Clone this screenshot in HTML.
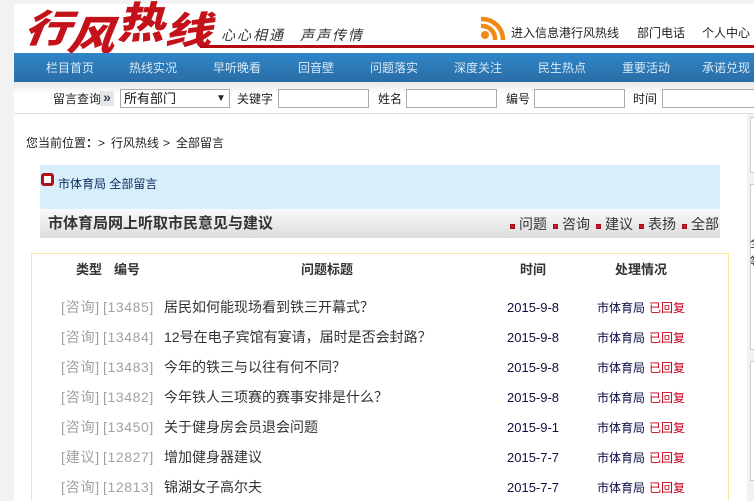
<!DOCTYPE html>
<html lang="zh"><head><meta charset="utf-8"><style>
html,body{margin:0;padding:0;width:754px;height:501px;overflow:hidden;background:#fff}
body{position:relative;font-family:"Liberation Sans","WenQuanYi Zen Hei","Noto Sans CJK SC",sans-serif;font-size:12px;color:#222}
.a{position:absolute;white-space:nowrap;line-height:16px}
.n{top:60px;color:#d9e9f6}
.l{top:91px}
.i{position:absolute;top:89px;height:17px;box-sizing:content-box;border:1px solid #aaa;background:#fff;width:89px}
.t{font-size:14px;color:#333;left:164px}
.c{font-size:14px;color:#a2a2a2;left:61px;letter-spacing:.8px}
.c span{position:absolute;left:42px;letter-spacing:.6px}
.d{left:507px;color:#110f3c;font-size:13px}
.s{left:597px;color:#0b0b45}
.s b{font-weight:normal;color:#c4001a;margin-left:4px}
.h{top:262px;font-weight:bold;color:#333;font-size:13px}
.q{position:absolute;top:224px;width:5px;height:5px;background:radial-gradient(#e02030,#8a0010)}
.m{top:216px;font-size:14px;color:#333}
.b{position:absolute;left:750px;width:6px;border:1px solid #ccc;background:#fff;box-sizing:border-box}
</style></head><body>
<div class="a" style="left:0;top:0;width:14px;height:501px;background:#f2f2f2"></div>
<div class="a" style="left:0;top:0;width:754px;height:4px;background:#f2f2f2"></div>
<svg class="a" style="left:14px;top:0" width="230" height="54">
<g fill="#c4121a" font-family="Noto Sans CJK SC" font-weight="900">
<text font-size="38" transform="translate(9,42) skewX(-22) scale(1.22,1)">行</text>
<text font-size="40" transform="translate(52,50) skewX(-22) scale(1.18,1)">风</text>
<text font-size="43" transform="translate(103,38) skewX(-14) scale(1.1,1)">热</text>
<text font-size="38" transform="translate(150,44) skewX(-18) scale(1.24,1)">线</text>
</g></svg>
<div class="a" style="left:221px;top:27px;font-size:14px;font-style:italic;letter-spacing:2px;color:#333">心心相通</div>
<div class="a" style="left:300px;top:27px;font-size:14px;font-style:italic;letter-spacing:2px;color:#333">声声传情</div>
<div class="a" style="left:200px;top:45px;width:554px;height:3px;background:#b40a10"></div>
<svg class="a" style="left:480px;top:16px" width="26" height="25"><g fill="none" stroke="#f08a14" stroke-width="4.5"><path d="M1 10A13 13 0 0 1 15 24"/><path d="M1 3A21 21 0 0 1 23 24"/></g><circle cx="5" cy="19" r="4" fill="#f08a14"/></svg>
<div class="a" style="left:511px;top:25px">进入信息港行风热线</div>
<div class="a" style="left:637px;top:25px">部门电话</div>
<div class="a" style="left:702px;top:25px">个人中心</div>
<div class="a" style="left:14px;top:53px;width:740px;height:29px;background:linear-gradient(#2f86c8,#2a6da6)"></div>
<div class="a n" style="left:46px">栏目首页</div><div class="a n" style="left:129px">热线实况</div><div class="a n" style="left:213px">早听晚看</div><div class="a n" style="left:298px">回音壁</div><div class="a n" style="left:370px">问题落实</div><div class="a n" style="left:454px">深度关注</div><div class="a n" style="left:538px">民生热点</div><div class="a n" style="left:622px">重要活动</div><div class="a n" style="left:702px">承诺兑现</div>
<div class="a" style="left:14px;top:82px;width:740px;height:31px;background:linear-gradient(#e8e8e8,#fff 40%);border-bottom:1px solid #ddd"></div>
<div class="a l" style="left:53px">留言查询</div>
<div class="a" style="left:100px;top:91px;width:14px;height:15px;background:#e6e6e6;color:#345;font-size:14px;font-weight:bold;line-height:13px;text-align:center">»</div>
<div class="i" style="left:120px;width:108px"></div>
<div class="a" style="left:124px;top:91px;font-size:13px;color:#111">所有部门</div>
<div class="a" style="left:216px;top:91px;font-size:10px;color:#222">▼</div>
<div class="a l" style="left:237px">关键字</div><div class="i" style="left:278px"></div>
<div class="a l" style="left:378px">姓名</div><div class="i" style="left:406px"></div>
<div class="a l" style="left:506px">编号</div><div class="i" style="left:534px"></div>
<div class="a l" style="left:633px">时间</div><div class="i" style="left:662px;width:100px"></div>
<div class="a" style="left:26px;top:135px;color:#222">您当前位置<b>：</b></div>
<div class="a" style="left:98px;top:135px">&gt;</div>
<div class="a" style="left:111px;top:135px">行风热线</div>
<div class="a" style="left:163px;top:135px">&gt;</div>
<div class="a" style="left:176px;top:135px">全部留言</div>
<div class="a" style="left:40px;top:165px;width:680px;height:44px;background:#d9eefb"></div>
<div class="a" style="left:41px;top:173px;width:7px;height:7px;border:3.5px solid #b01018;border-radius:3px;background:#fff"></div>
<div class="a" style="left:58px;top:176px;color:#0b2a5a">市体育局 全部留言</div>
<div class="a" style="left:40px;top:209px;width:680px;height:29px;background:linear-gradient(#fafafa,#dcdcdc)"></div>
<div class="a" style="left:48px;top:216px;font-size:15px;font-weight:bold;color:#333">市体育局网上听取市民意见与建议</div>
<div class="q" style="left:510px"></div><div class="a m" style="left:519px">问题</div>
<div class="q" style="left:553px"></div><div class="a m" style="left:562px">咨询</div>
<div class="q" style="left:596px"></div><div class="a m" style="left:605px">建议</div>
<div class="q" style="left:639px"></div><div class="a m" style="left:648px">表扬</div>
<div class="q" style="left:682px"></div><div class="a m" style="left:691px;width:29px;overflow:hidden">全部</div>
<div class="a" style="left:31px;top:253px;width:696px;height:260px;border:1px solid #f5e6a0"></div>
<div class="a" style="left:747px;top:114px;width:7px;height:387px;background:#f2f2f2"></div>
<div class="b" style="top:117px;height:56px"></div>
<div class="b" style="top:184px;height:166px"></div>
<div class="b" style="top:361px;height:120px"></div>
<div class="a" style="left:750px;top:235px;color:#333;width:4px;overflow:hidden">全</div>
<div class="a" style="left:750px;top:254px;color:#333;width:4px;overflow:hidden">等</div>
<div class="a h" style="left:76px">类型</div><div class="a h" style="left:114px">编号</div><div class="a h" style="left:301px">问题标题</div><div class="a h" style="left:520px">时间</div><div class="a h" style="left:615px">处理情况</div>

<div class="a c" style="top:299px">[咨询]<span>[13485]</span></div><div class="a t" style="top:299px">居民如何能现场看到铁三开幕式？</div><div class="a d" style="top:300px">2015-9-8</div><div class="a s" style="top:300px">市体育局<b>已回复</b></div>
<div class="a c" style="top:329px">[咨询]<span>[13484]</span></div><div class="a t" style="top:329px">12号在电子宾馆有宴请，届时是否会封路？</div><div class="a d" style="top:330px">2015-9-8</div><div class="a s" style="top:330px">市体育局<b>已回复</b></div>
<div class="a c" style="top:359px">[咨询]<span>[13483]</span></div><div class="a t" style="top:359px">今年的铁三与以往有何不同？</div><div class="a d" style="top:360px">2015-9-8</div><div class="a s" style="top:360px">市体育局<b>已回复</b></div>
<div class="a c" style="top:389px">[咨询]<span>[13482]</span></div><div class="a t" style="top:389px">今年铁人三项赛的赛事安排是什么？</div><div class="a d" style="top:390px">2015-9-8</div><div class="a s" style="top:390px">市体育局<b>已回复</b></div>
<div class="a c" style="top:419px">[咨询]<span>[13450]</span></div><div class="a t" style="top:419px">关于健身房会员退会问题</div><div class="a d" style="top:420px">2015-9-1</div><div class="a s" style="top:420px">市体育局<b>已回复</b></div>
<div class="a c" style="top:449px">[建议]<span>[12827]</span></div><div class="a t" style="top:449px">增加健身器建议</div><div class="a d" style="top:450px">2015-7-7</div><div class="a s" style="top:450px">市体育局<b>已回复</b></div>
<div class="a c" style="top:479px">[咨询]<span>[12813]</span></div><div class="a t" style="top:479px">锦湖女子高尔夫</div><div class="a d" style="top:480px">2015-7-7</div><div class="a s" style="top:480px">市体育局<b>已回复</b></div>
</body></html>
